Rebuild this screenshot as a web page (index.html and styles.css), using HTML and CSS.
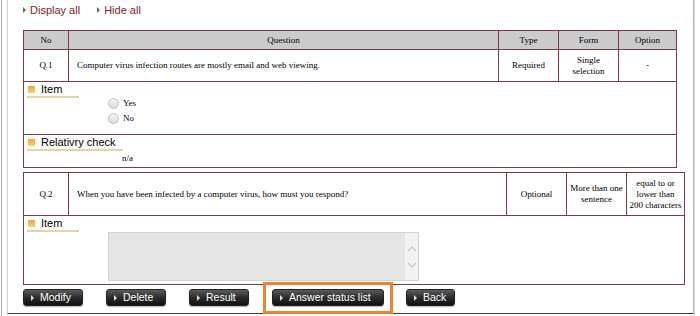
FILE: index.html
```html
<!DOCTYPE html>
<html lang="en">
<head>
    <meta charset="UTF-8">
    <title>Question list</title>
    <link rel="stylesheet" href="styles.css">
</head>
<body>
    <div class="window">
        <div class="panel">
            <div class="toggles">
                <a class="toggle">Display all</a>
                <a class="toggle">Hide all</a>
            </div>

            <table class="question">
                <tr class="head">
                    <th class="c-no">No</th>
                    <th class="c-text">Question</th>
                    <th class="c-type">Type</th>
                    <th class="c-form">Form</th>
                    <th class="c-opt">Option</th>
                </tr>
                <tr class="row row-q1">
                    <td>Q.1</td>
                    <td class="text">Computer virus infection routes are mostly email and web viewing.</td>
                    <td>Required</td>
                    <td>Single<br>selection</td>
                    <td>-</td>
                </tr>
                <tr>
                    <td colspan="5" class="detail detail-item">
                        <div class="label">Item</div>
                        <div class="choices">
                            <div class="choice"><span class="radio"></span>Yes</div>
                            <div class="choice"><span class="radio"></span>No</div>
                        </div>
                    </td>
                </tr>
                <tr>
                    <td colspan="5" class="detail detail-check">
                        <div class="label">Relativry check</div>
                        <div class="na">n/a</div>
                    </td>
                </tr>
            </table>

            <table class="question second">
                <tr class="row row-q2">
                    <td class="c-no">Q.2</td>
                    <td class="text c-text">When you have been infected by a computer virus, how must you respond?</td>
                    <td class="c-type">Optional</td>
                    <td class="c-form">More than one<br>sentence</td>
                    <td class="c-opt">equal to or<br>lower than<br>200 characters</td>
                </tr>
                <tr>
                    <td colspan="5" class="detail detail-text">
                        <div class="label">Item</div>
                        <div class="answer">
                            <div class="scroll">
                                <svg width="10" height="30" viewBox="0 0 10 30">
                                    <path d="M1 9 L5 5 L9 9" fill="none" stroke="#c4c4c4" stroke-width="1.2"/>
                                    <path d="M1 21 L5 25 L9 21" fill="none" stroke="#c4c4c4" stroke-width="1.2"/>
                                </svg>
                            </div>
                        </div>
                    </td>
                </tr>
            </table>

            <div class="actions">
                <button class="btn btn-modify">Modify</button>
                <button class="btn btn-delete">Delete</button>
                <button class="btn btn-result">Result</button>
                <button class="btn btn-status marked">Answer status list</button>
                <button class="btn btn-back">Back</button>
            </div>
        </div>
    </div>
</body>
</html>
```

FILE: styles.css
```css
body {
    margin: 0;
    background: #fff;
    font-family: "Liberation Serif", "Times New Roman", serif;
}
.window {
    margin-left: 1px;
    width: 694px;
    height: 316px;
    border-left: 1px solid #a9a9a9;
    border-right: 1px solid #ddd6c0;
    box-sizing: border-box;
}
.panel {
    margin-left: 5px;
    width: 687px;
    height: 314px;
    box-sizing: border-box;
    border-left: 1px solid #cfcfcf;
    border-right: 1px solid #b8b8b8;
    border-bottom: 1px solid #3a3a3a;
    padding-left: 15px;
}
.toggles {
    height: 30px;
    box-sizing: border-box;
    padding-top: 2px;
    font-family: "Liberation Sans", Arial, sans-serif;
    font-size: 11px;
    line-height: 16px;
    display: flex;
    gap: 17px;
}
.toggle {
    color: #861a2a;
    padding-left: 7px;
    position: relative;
    cursor: pointer;
}
.toggle::before {
    content: "";
    position: absolute;
    left: 0;
    top: 5px;
    border-left: 3px solid #666;
    border-top: 3px solid transparent;
    border-bottom: 3px solid transparent;
}
.question {
    width: 654px;
    border-collapse: collapse;
    table-layout: fixed;
    font-size: 9px;
    color: #000;
}
.question th,
.question td {
    border: 1px solid #7d3a42;
    padding: 0;
    text-align: center;
    vertical-align: middle;
    line-height: 11px;
}
.question th {
    background: #cbcbcb;
    font-weight: normal;
    height: 18px;
}
.c-no { width: 44px; }
.c-text { width: 429px; }
.c-type { width: 59px; }
.c-form { width: 59px; }
.c-opt { width: 57px; }
.question td.text {
    text-align: left;
    padding-left: 8px;
}
.row-q1 td { height: 31px; }
.row-q2 td { height: 42px; }
.question td.detail {
    text-align: left;
    vertical-align: top;
    padding: 1px 0 0 3px;
}
.detail-item { height: 51px; }
.detail-check { height: 31px; }
.detail-text { height: 67px; }
.label {
    display: inline-block;
    min-width: 52px;
    box-sizing: border-box;
    padding: 0 7px 0 14px;
    font-family: "Liberation Sans", Arial, sans-serif;
    font-size: 11px;
    line-height: 13px;
    border-bottom: 2px solid #e4d4a8;
    position: relative;
}
.label::before {
    content: "";
    position: absolute;
    left: 1px;
    top: 3px;
    width: 7px;
    height: 7px;
    background: linear-gradient(#f0a538, #f8cf7c);
}
.choices {
    margin: -2px 0 0 81px;
}
.choice {
    display: flex;
    align-items: center;
    height: 15px;
}
.radio {
    width: 9px;
    height: 9px;
    border: 1px solid #c0c0c0;
    border-radius: 50%;
    background: linear-gradient(#f4f4f4, #dcdcdc);
    margin-right: 4px;
}
.na {
    margin: 2px 0 0 95px;
}
.second {
    margin-top: 4px;
}
.answer {
    margin-left: 81px;
    width: 311px;
    height: 49px;
    box-sizing: border-box;
    background: #e5e5e5;
    border: 1px solid #d2d2d2;
    display: flex;
    justify-content: flex-end;
    align-items: center;
}
.scroll {
    width: 13px;
    height: 47px;
    background: #f2f2f2;
    display: flex;
    align-items: center;
    justify-content: center;
}
.actions {
    display: flex;
    margin-top: 4px;
}
.btn {
    height: 17px;
    padding: 0 0 0 16px;
    border: 1px solid #222;
    border-radius: 3px;
    background: linear-gradient(#5c5c5c, #2c2c2c 50%, #111);
    color: #fff;
    font-family: "Liberation Sans", Arial, sans-serif;
    font-size: 10.5px;
    line-height: 15px;
    text-align: left;
    position: relative;
    box-shadow: 0 1px 1px rgba(0,0,0,0.3);
}
.btn::before {
    content: "";
    position: absolute;
    left: 7px;
    top: 5px;
    border-left: 3px solid #ddd;
    border-top: 3px solid transparent;
    border-bottom: 3px solid transparent;
}
.btn-modify { width: 60px; }
.btn-delete { width: 60px; margin-left: 23px; }
.btn-result { width: 60px; margin-left: 23px; }
.btn-status { width: 112px; margin-left: 23px; }
.btn-back { width: 49px; margin-left: 22px; }
.marked::after {
    content: "";
    position: absolute;
    left: -10px;
    right: -10px;
    top: -8px;
    bottom: -9px;
    border: 3px solid #f08330;
}
```
